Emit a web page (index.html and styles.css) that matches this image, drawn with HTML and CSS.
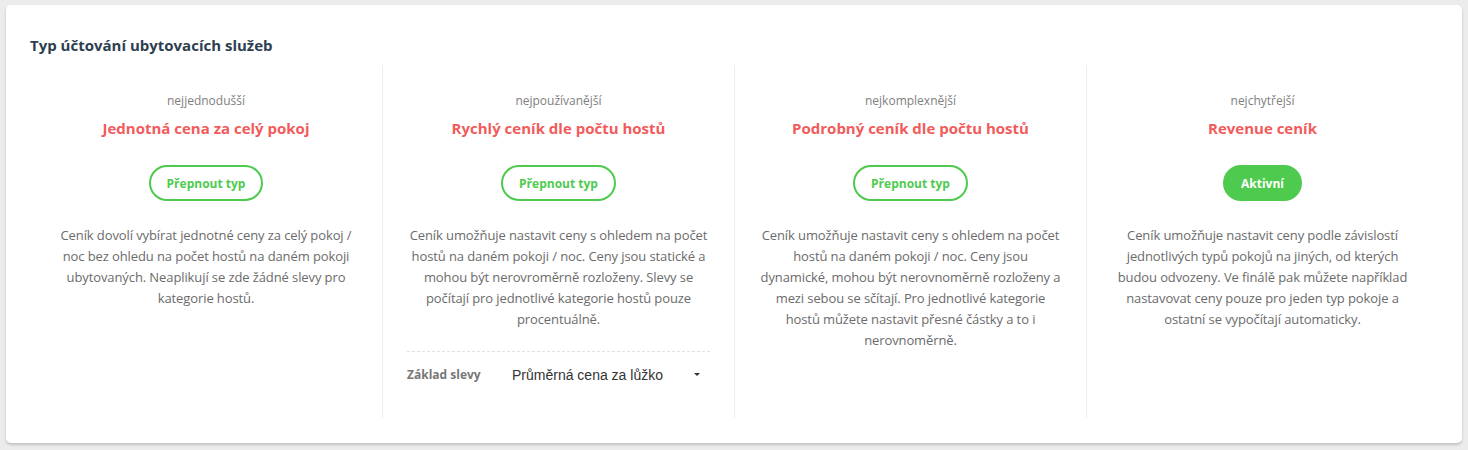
FILE: index.html
```html
<!DOCTYPE html>
<html lang="cs">

<head>
    <meta charset="UTF-8">
    <meta name="viewport" content="width=device-width, initial-scale=1.0">
    <title>Typ účtování ubytovacích služeb</title>
    <link rel="stylesheet" href="styles.css">
</head>

<body>

    <div class="card">

        <h2 class="card-title">Typ účtování ubytovacích služeb</h2>

        <div class="types">

            <div class="type">
                <div class="type-label">nejjednodušší</div>
                <h3 class="type-name">Jednotná cena za celý pokoj</h3>
                <button class="btn btn-outline">Přepnout typ</button>
                <p class="type-desc">Ceník dovolí vybírat jednotné ceny za celý pokoj / noc bez ohledu na počet hostů na daném pokoji ubytovaných. Neaplikují se zde žádné slevy pro kategorie hostů.</p>
            </div>

            <div class="type">
                <div class="type-label">nejpoužívanější</div>
                <h3 class="type-name">Rychlý ceník dle počtu hostů</h3>
                <button class="btn btn-outline">Přepnout typ</button>
                <p class="type-desc">Ceník umožňuje nastavit ceny s ohledem na počet hostů na daném pokoji / noc. Ceny jsou statické a mohou být nerovroměrně rozloženy. Slevy se počítají pro jednotlivé kategorie hostů pouze procentuálně.</p>
                <div class="discount">
                    <label class="discount-label">Základ slevy</label>
                    <div class="select">
                        <span>Průměrná cena za lůžko</span>
                        <span class="caret"></span>
                    </div>
                </div>
            </div>

            <div class="type">
                <div class="type-label">nejkomplexnější</div>
                <h3 class="type-name">Podrobný ceník dle počtu hostů</h3>
                <button class="btn btn-outline">Přepnout typ</button>
                <p class="type-desc">Ceník umožňuje nastavit ceny s ohledem na počet hostů na daném pokoji / noc. Ceny jsou dynamické, mohou být nerovnoměrně rozloženy a mezi sebou se sčítají. Pro jednotlivé kategorie hostů můžete nastavit přesné částky a to i nerovnoměrně.</p>
            </div>

            <div class="type">
                <div class="type-label">nejchytřejší</div>
                <h3 class="type-name">Revenue ceník</h3>
                <button class="btn btn-active">Aktivní</button>
                <p class="type-desc">Ceník umožňuje nastavit ceny podle závislostí jednotlivých typů pokojů na jiných, od kterých budou odvozeny. Ve finálě pak můžete například nastavovat ceny pouze pro jeden typ pokoje a ostatní se vypočítají automaticky.</p>
            </div>

        </div>

    </div>

</body>

</html>
```

FILE: styles.css
```css
html,
body {
    margin: 0;
    padding: 0;
    box-sizing: border-box;
    font-family: "Open Sans", "Noto Sans", sans-serif;
}

body {
    background: #ececec;
    padding: 5px 6px 7px;
}

.card {
    background: #fff;
    border-radius: 5px;
    box-shadow: 0 2px 3px rgba(0, 0, 0, 0.18);
    padding: 30px 24px 25px;
}

.card-title {
    margin: 0 0 10px;
    font-size: 15px;
    line-height: 20px;
    font-weight: 700;
    color: #2d3e50;
}

.types {
    display: grid;
    grid-template-columns: repeat(4, 1fr);
}

.type {
    display: flex;
    flex-direction: column;
    align-items: center;
    padding: 28px 24px 0;
    min-height: 325px;
    border-left: 1px solid #eee;
    text-align: center;
}

.type:first-child {
    border-left: none;
}

.type-label {
    font-size: 12px;
    line-height: 16px;
    color: #808080;
}

.type-name {
    margin: 8px 0 0;
    font-size: 15px;
    line-height: 22px;
    font-weight: 700;
    color: #f25b5b;
}

.btn {
    margin-top: 26px;
    height: 36px;
    padding: 0 16px;
    border-radius: 18px;
    font-family: inherit;
    font-size: 12px;
    font-weight: 700;
    cursor: pointer;
}

.btn-outline {
    border: 2px solid #4ecb4e;
    background: #fff;
    color: #4ecb4e;
}

.btn-active {
    border: 2px solid #4ecb4e;
    background: #4ecb4e;
    color: #fff;
}

.type-desc {
    margin: 24px 0 0;
    font-size: 13px;
    line-height: 21px;
    letter-spacing: -0.1px;
    color: #6b6b6b;
}

.discount {
    display: flex;
    align-items: center;
    align-self: stretch;
    margin-top: 21px;
    padding-top: 14px;
    border-top: 1px dashed #e2e2e2;
}

.discount-label {
    width: 105px;
    font-size: 12px;
    font-weight: 700;
    color: #777;
    text-align: left;
}

.select {
    flex: 1;
    display: flex;
    justify-content: space-between;
    align-items: center;
    font-family: "Liberation Sans", Arial, sans-serif;
    font-size: 14px;
    color: #333;
    padding-right: 10px;
}

.caret {
    width: 0;
    height: 0;
    border-left: 3px solid transparent;
    border-right: 3px solid transparent;
    border-top: 3px solid #333;
}
```
